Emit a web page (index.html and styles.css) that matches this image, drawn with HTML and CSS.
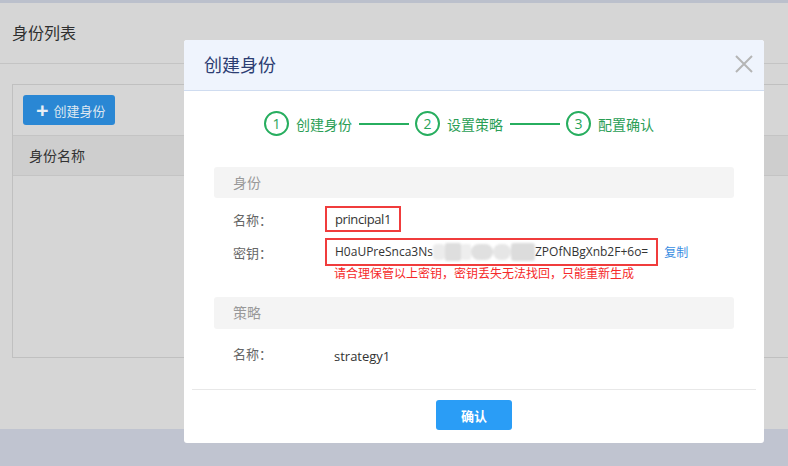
FILE: index.html
```html
<!DOCTYPE html>
<html lang="zh-CN">
<head>
<meta charset="utf-8">
<title>身份列表</title>
<link rel="stylesheet" href="styles.css">
</head>
<body>
<div class="page">
  <div class="topbar"></div>
  <div class="main">
    <div class="page-title">身份列表</div>
    <div class="card">
      <div class="toolbar">
        <button class="btn-create"><span class="plus">+</span>创建身份</button>
      </div>
      <div class="table-head">身份名称</div>
      <div class="table-body"></div>
    </div>
  </div>
  <div class="bottom"></div>
</div>

<div class="modal">
  <div class="modal-header">
    <div class="modal-title">创建身份</div>
    <svg class="close" width="18" height="18" viewBox="0 0 18 18"><path d="M1 1L17 17M17 1L1 17" stroke="#b5b5b5" stroke-width="2" fill="none"/></svg>
  </div>
  <div class="modal-body">
    <div class="steps">
      <div class="step"><span class="circle">1</span><span class="step-label">创建身份</span></div>
      <span class="step-line"></span>
      <div class="step"><span class="circle">2</span><span class="step-label">设置策略</span></div>
      <span class="step-line"></span>
      <div class="step"><span class="circle">3</span><span class="step-label">配置确认</span></div>
    </div>

    <div class="section-head">身份</div>
    <div class="form">
      <div class="row">
        <span class="label">名称：</span>
        <span class="value boxed name">principal1</span>
      </div>
      <div class="row row-key">
        <span class="label">密钥：</span>
        <span class="value boxed key">H0aUPreSnca3Ns<span class="masked"><i class="blob b1"></i><i class="blob b2"></i><i class="blob b3"></i><i class="blob b4"></i><i class="blob b5"></i><i class="blob b6"></i></span>ZPOfNBgXnb2F+6o=</span>
        <a class="copy">复制</a>
      </div>
      <div class="warn">请合理保管以上密钥，密钥丢失无法找回，只能重新生成</div>
    </div>

    <div class="section-head second">策略</div>
    <div class="form">
      <div class="row">
        <span class="label">名称：</span>
        <span class="value plain">strategy1</span>
      </div>
    </div>
  </div>
  <div class="modal-footer">
    <button class="btn-ok">确认</button>
  </div>
</div>
</body>
</html>
```

FILE: styles.css
```css
* { box-sizing: border-box; }
html, body { margin: 0; padding: 0; }
body {
  width: 788px;
  height: 466px;
  overflow: hidden;
  font-family: "Open Sans", "Noto Sans CJK SC", sans-serif;
  background: #c0c4d0;
  position: relative;
}
.page { width: 788px; height: 466px; display: flex; flex-direction: column; }
.topbar { height: 3px; background: #bbc0cc; }
.main { height: 426px; background: #d6d6d6; overflow: hidden; }
.bottom { flex: 1; background: #c0c4d0; }

.page-title {
  height: 61px;
  border-bottom: 1px solid #c4c4c4;
  padding-left: 12px;
  font-size: 16px;
  line-height: 60px;
  color: #2f2f2f;
}
.card {
  margin: 20px 0 0 12px;
  border: 1px solid #c0c0c0;
  border-right: none;
  height: 274px;
  display: flex;
  flex-direction: column;
}
.toolbar { height: 50px; padding: 10px 0 0 10px; }
.btn-create {
  width: 92px;
  height: 30px;
  border: none;
  border-radius: 3px;
  background: #2a87d4;
  color: #dfe8f1;
  font-family: inherit;
  font-size: 13px;
  padding: 0 0 0 13px;
  display: flex;
  align-items: center;
}
.plus { font-size: 22px; font-weight: bold; line-height: 1; margin-right: 5px; margin-top: -3px; color: #e8eef4; }
.table-head {
  height: 41px;
  border-top: 1px solid #c4c4c4;
  border-bottom: 1px solid #c4c4c4;
  background: #cecece;
  padding-left: 16px;
  font-size: 14px;
  line-height: 40px;
  color: #333;
}
.table-body { flex: 1; }

.modal {
  position: absolute;
  left: 184px;
  top: 40px;
  width: 580px;
  height: 403px;
  background: #fff;
  border-radius: 3px;
  overflow: hidden;
  display: flex;
  flex-direction: column;
}
.modal-header {
  height: 51px;
  background: #eff4fd;
  border-bottom: 1px solid #cfdcf0;
  display: flex;
  align-items: center;
  justify-content: space-between;
  padding: 0 11px 0 20px;
}
.modal-title { font-size: 18px; color: #2c3d72; margin-top: -2px; }
.close { display: block; margin-top: -2px; }

.modal-body { flex: 1; padding: 20px 30px 0; }
.steps {
  display: flex;
  align-items: center;
  padding-left: 50px;
  height: 25px;
}
.step { display: flex; align-items: center; }
.circle {
  width: 25px;
  height: 25px;
  border: 2px solid #27ae5f;
  border-radius: 50%;
  color: #27a35a;
  font-size: 14px;
  display: flex;
  align-items: center;
  justify-content: center;
  line-height: 1;
}
.step-label { font-size: 14px; color: #2a9e55; margin-left: 7px; margin-right: 7px; }
.step-line { width: 50px; height: 2px; background: #27ae5f; margin-right: 6px; }

.section-head {
  margin-top: 31px;
  height: 31px;
  background: #f4f4f4;
  border-radius: 3px;
  padding-left: 19px;
  font-size: 14px;
  line-height: 31px;
  color: #999;
}
.section-head.second { margin-top: 15px; height: 32px; line-height: 32px; }
.form { padding-left: 19px; }
.row { display: flex; align-items: center; margin-top: 8px; }
.row-key { margin-top: 6px; }
.label { width: 92px; font-size: 13px; color: #666; font-family: "Noto Sans CJK TC", sans-serif; }
.value { font-size: 13px; color: #333; white-space: nowrap; }
.boxed {
  border: 2px solid #f03c3c;
  height: 26px;
  line-height: 22px;
  padding: 0 8px;
}
.name { letter-spacing: -0.4px; }
.key { height: 28px; line-height: 24px; font-size: 12px; padding-right: 8px; display: flex; align-items: center; }
.masked {
  display: inline-flex;
  align-items: center;
  width: 102px;
  height: 18px;
  filter: blur(1px);
}
.blob { display: block; height: 16px; background: #e2e2e2; border-radius: 8px; }
.b1 { width: 12px; background: #ececec; border-radius: 4px; }
.b2 { width: 16px; background: #dedede; border-radius: 2px; height: 18px; }
.b3 { width: 10px; background: #eeeeee; border-radius: 2px; }
.b4 { width: 22px; background: #e0e0e0; border-radius: 9px; }
.b5 { width: 18px; background: #e6e6e6; border-radius: 8px; }
.b6 { width: 24px; background: #dcdcdc; border-radius: 3px; height: 18px; }
.plain { padding-left: 9px; line-height: 26px; margin-top: 6px; }
.copy { font-size: 12px; color: #3a8ee2; margin-left: 6px; }
.warn {
  font-size: 12px;
  color: #f52a2a;
  padding-left: 101px;
  line-height: 16px;
  margin-top: 0;
}

.modal-footer {
  height: 54px;
  margin: 0 8px;
  border-top: 1px solid #e8e8e8;
  display: flex;
  justify-content: center;
  padding-top: 10px;
}
.btn-ok {
  width: 76px;
  height: 30px;
  border: none;
  border-radius: 3px;
  background: #2a9df6;
  color: #fff;
  font-family: inherit;
  font-size: 13px;
  font-weight: bold;
}
```
